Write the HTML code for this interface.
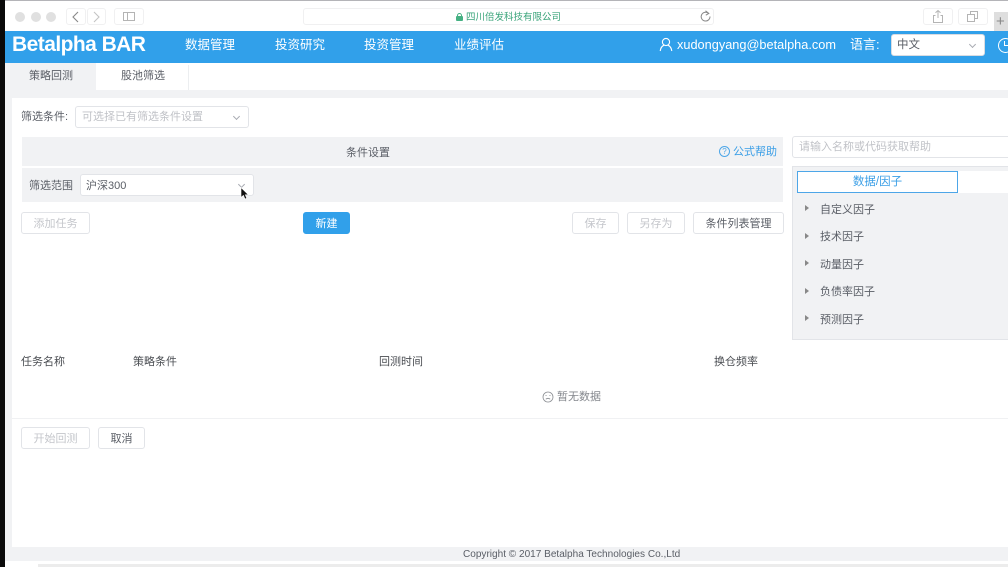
<!DOCTYPE html>
<html lang="zh">
<head>
<meta charset="utf-8">
<style>
html,body{margin:0;padding:0;background:#fff}
body{width:1008px;height:567px;position:relative;overflow:hidden;font-family:"Liberation Sans","Noto Sans CJK SC",sans-serif;font-size:11px;color:#5a5e66;filter:blur(.25px)}
.a{position:absolute;box-sizing:border-box;white-space:nowrap}
.btn{border:1px solid #e2e4e8;border-radius:3px;background:#fff;text-align:center;color:#c4c6cb;height:22px;line-height:22px;font-size:11px}
.t{line-height:16px}
.chev{position:absolute;width:4px;height:4px;border-right:1px solid #a8abb2;border-bottom:1px solid #a8abb2;transform:rotate(45deg)}
.tri{position:absolute;width:0;height:0;border-left:4px solid #888;border-top:3px solid transparent;border-bottom:3px solid transparent}
.sb{border:1px solid #f0f0f1;border-radius:3px;background:#fff}
</style>
</head>
<body>
<!-- window chrome -->
<div class="a" style="left:0;top:0;width:1008px;height:31px;background:#fff"></div>
<div class="a" style="left:0;top:0;width:1008px;height:1px;background:#b4b4b8"></div>
<div class="a" style="left:0;top:0;width:5px;height:567px;background:#0a0a0a;z-index:5"></div>
<div class="a" style="left:15px;top:12px;width:10px;height:10px;border-radius:50%;background:#e0e0e0"></div>
<div class="a" style="left:31px;top:12px;width:10px;height:10px;border-radius:50%;background:#e0e0e0"></div>
<div class="a" style="left:46px;top:12px;width:10px;height:10px;border-radius:50%;background:#e0e0e0"></div>
<div class="a sb" style="left:66px;top:8px;width:20px;height:17px"></div>
<div class="a sb" style="left:87px;top:8px;width:19px;height:17px"></div>
<svg class="a" style="left:66px;top:8px" width="42" height="18" fill="none" stroke-width="1.1"><path d="M12 4 L7 9 L12 14" stroke="#888"/><path d="M28 4 L33 9 L28 14" stroke="#c4c4c4"/></svg>
<div class="a sb" style="left:114px;top:8px;width:30px;height:17px"></div>
<svg class="a" style="left:122px;top:11px" width="14" height="11" fill="none" stroke="#b4b4b4"><rect x="1.5" y="1.5" width="11" height="8"/><path d="M5.5 1.5V9.5"/></svg>
<div class="a sb" style="left:303px;top:8px;width:411px;height:17px"></div>
<div class="a" style="left:456px;top:16px;width:7px;height:5px;background:#45b183;border-radius:1px"></div>
<div class="a" style="left:457px;top:13px;width:5px;height:5px;border:1px solid #45b183;border-radius:3px 3px 0 0"></div>
<div class="a" style="left:466px;top:10px;font-size:9.5px;line-height:15px;color:#3aa47a">四川倍发科技有限公司</div>
<svg class="a" style="left:699px;top:10px" width="13" height="13" fill="none" stroke="#888" stroke-width="1"><path d="M9.8 3.6A4.4 4.4 0 1 0 11 6.5"/><path d="M6.5 0.8L9.8 3.4L6.8 5.2" /></svg>
<div class="a sb" style="left:923px;top:8px;width:30px;height:17px"></div>
<div class="a sb" style="left:958px;top:8px;width:30px;height:17px"></div>
<svg class="a" style="left:931px;top:9px" width="14" height="15" fill="none" stroke="#b4b4b4"><path d="M4.5 6.5H2.5V13.5H11.5V6.5H9.5M7 9V1.5M4.5 3.8L7 1.5L9.5 3.8"/></svg>
<svg class="a" style="left:966px;top:10px" width="14" height="13" fill="none" stroke="#b4b4b4"><rect x="1.5" y="4.5" width="7" height="7"/><path d="M4.5 4.5V1.5H11.5V8.5H8.5"/></svg>
<div class="a" style="left:994px;top:12px;width:14px;height:19px;background:#dedede"></div>
<div class="a" style="left:996px;top:13px;font-size:15px;line-height:18px;color:#888">+</div>

<!-- header -->
<div class="a" style="left:0;top:31px;width:1008px;height:32px;background:#31a0ea"></div>
<div class="a" style="left:12px;top:33px;font-size:21px;line-height:23px;font-weight:bold;color:#fff;letter-spacing:-.55px">Betalpha BAR</div>
<div class="a t" style="left:185px;top:37px;color:#fff;font-size:12.5px">数据管理</div>
<div class="a t" style="left:275px;top:37px;color:#fff;font-size:12.5px">投资研究</div>
<div class="a t" style="left:364px;top:37px;color:#fff;font-size:12.5px">投资管理</div>
<div class="a t" style="left:454px;top:37px;color:#fff;font-size:12.5px">业绩评估</div>
<svg class="a" style="left:659px;top:37px" width="14" height="15" fill="none" stroke="#fff" stroke-width="1.1"><circle cx="7" cy="5" r="3.6"/><path d="M1.2 14C1.6 10.6 3.6 8.8 5.2 8.2M12.8 14C12.4 10.6 10.4 8.8 8.8 8.2"/></svg>
<div class="a t" style="left:677px;top:37px;color:#fff;font-size:12.75px">xudongyang@betalpha.com</div>
<div class="a t" style="left:850px;top:37px;color:#fff;font-size:13px">语言:</div>
<div class="a" style="left:891px;top:34px;width:94px;height:22px;background:#fff;border-radius:3px;border:1px solid #d9dce2;line-height:20px;padding-left:5px;color:#5a5e66;font-size:11.5px">中文</div>
<div class="chev" style="left:970px;top:42px"></div>
<div class="a" style="left:998px;top:38px;width:15px;height:15px;border:1.4px solid #fff;border-radius:50%"></div>
<div class="a" style="left:1004px;top:41px;width:1px;height:5px;background:#fff"></div>
<div class="a" style="left:1004px;top:45px;width:4px;height:1px;background:#fff"></div>

<!-- tabs -->
<div class="a" style="left:5px;top:63px;width:91px;height:27px;background:#f1f2f4"></div>
<div class="a t" style="left:29px;top:68px;color:#5a5e66">策略回测</div>
<div class="a t" style="left:121px;top:68px;color:#5a5e66">股池筛选</div>
<div class="a" style="left:188px;top:65px;width:1px;height:25px;background:#eceef0"></div>
<div class="a" style="left:5px;top:90px;width:1003px;height:8px;background:#f1f2f4"></div>
<div class="a" style="left:5px;top:98px;width:7px;height:466px;background:#f1f2f4"></div>

<!-- filter row -->
<div class="a t" style="left:21px;top:109px;color:#5a5e66">筛选条件:</div>
<div class="a" style="left:75px;top:106px;width:174px;height:22px;border:1px solid #e2e4e8;border-radius:3px;line-height:20px;padding-left:6px;color:#c0c2c7;font-size:11px">可选择已有筛选条件设置</div>
<div class="chev" style="left:234px;top:114px"></div>

<!-- condition panel -->
<div class="a" style="left:22px;top:137px;width:761px;height:29px;background:#f1f2f4"></div>
<div class="a t" style="left:346px;top:145px;color:#5a5e66">条件设置</div>
<div class="a" style="left:719px;top:146px;width:11px;height:11px;border:1px solid #4da6e8;border-radius:50%;text-align:center;font-size:8px;line-height:9px;color:#4da6e8">?</div>
<div class="a t" style="left:733px;top:144px;color:#3a9ee6">公式帮助</div>
<div class="a" style="left:22px;top:168px;width:761px;height:34px;background:#f1f2f4"></div>
<div class="a t" style="left:29px;top:178px;color:#5a5e66">筛选范围</div>
<div class="a" style="left:80px;top:174px;width:174px;height:22px;background:#fff;border:1px solid #e2e4e8;border-radius:3px;line-height:22px;padding-left:5px;color:#5a5e66;font-size:11px">沪深300</div>
<div class="chev" style="left:239px;top:182px"></div>
<svg class="a" style="left:240px;top:187px;z-index:3" width="10" height="14"><path d="M1 0.5V10.5L3.4 8.4L5 12L6.8 11.2L5.3 7.8H8.4Z" fill="#111" stroke="#fff" stroke-width=".6"/></svg>

<!-- buttons -->
<div class="a btn" style="left:21px;top:212px;width:69px">添加任务</div>
<div class="a btn" style="left:303px;top:212px;width:47px;background:#31a0ea;border-color:#31a0ea;color:#fff">新建</div>
<div class="a btn" style="left:572px;top:212px;width:47px">保存</div>
<div class="a btn" style="left:627px;top:212px;width:58px">另存为</div>
<div class="a btn" style="left:693px;top:212px;width:91px;color:#5a5e66">条件列表管理</div>

<!-- right panel -->
<div class="a" style="left:792px;top:136px;width:230px;height:22px;border:1px solid #e2e4e8;border-radius:3px;line-height:20px;padding-left:6px;color:#c0c2c7;font-size:11px">请输入名称或代码获取帮助</div>
<div class="a" style="left:792px;top:166px;width:230px;height:174px;background:#f1f2f4;border:1px solid #e2e4e8"></div>
<div class="a" style="left:797px;top:171px;width:161px;height:22px;background:#fff;border:1px solid #4da6e8;text-align:center;line-height:21px;color:#3a9ee6;font-size:11.5px">数据/因子</div>
<div class="a" style="left:958px;top:171px;width:50px;height:22px;background:#fff"></div>
<div class="tri" style="left:805px;top:205px"></div><div class="a t" style="left:820px;top:202px">自定义因子</div>
<div class="tri" style="left:805px;top:233px"></div><div class="a t" style="left:820px;top:229px">技术因子</div>
<div class="tri" style="left:805px;top:260px"></div><div class="a t" style="left:820px;top:257px">动量因子</div>
<div class="tri" style="left:805px;top:288px"></div><div class="a t" style="left:820px;top:284px">负债率因子</div>
<div class="tri" style="left:805px;top:315px"></div><div class="a t" style="left:820px;top:312px">预测因子</div>

<!-- table -->
<div class="a t" style="left:21px;top:354px;color:#4a4d52">任务名称</div>
<div class="a t" style="left:133px;top:354px;color:#4a4d52">策略条件</div>
<div class="a t" style="left:379px;top:354px;color:#4a4d52">回测时间</div>
<div class="a t" style="left:714px;top:354px;color:#4a4d52">换仓频率</div>
<svg class="a" style="left:542px;top:391px" width="12" height="12" fill="none" stroke="#8a8d92" stroke-width=".8"><circle cx="6" cy="6" r="5"/><path d="M3.8 8.2Q6 6.4 8.2 8.2M3.5 4.6H4.6M7.4 4.6H8.5"/></svg>
<div class="a t" style="left:557px;top:389px;color:#85888e">暂无数据</div>
<div class="a" style="left:12px;top:418px;width:996px;height:1px;background:#f0f1f3"></div>
<div class="a btn" style="left:21px;top:427px;width:69px">开始回测</div>
<div class="a btn" style="left:98px;top:427px;width:47px;color:#5a5e66">取消</div>

<!-- footer -->
<div class="a" style="left:5px;top:547px;width:1003px;height:14px;background:#f1f2f4"></div>
<div class="a" style="left:463px;top:548px;font-size:10.05px;line-height:14px;color:#5a5e66">Copyright © 2017 Betalpha Technologies Co.,Ltd</div>
<div class="a" style="left:5px;top:561px;width:1003px;height:3px;background:#fff"></div>
<div class="a" style="left:5px;top:564px;width:1003px;height:3px;background:#ececec"></div>
<div class="a" style="left:5px;top:564px;width:33px;height:3px;background:#fff"></div>
</body>
</html>
